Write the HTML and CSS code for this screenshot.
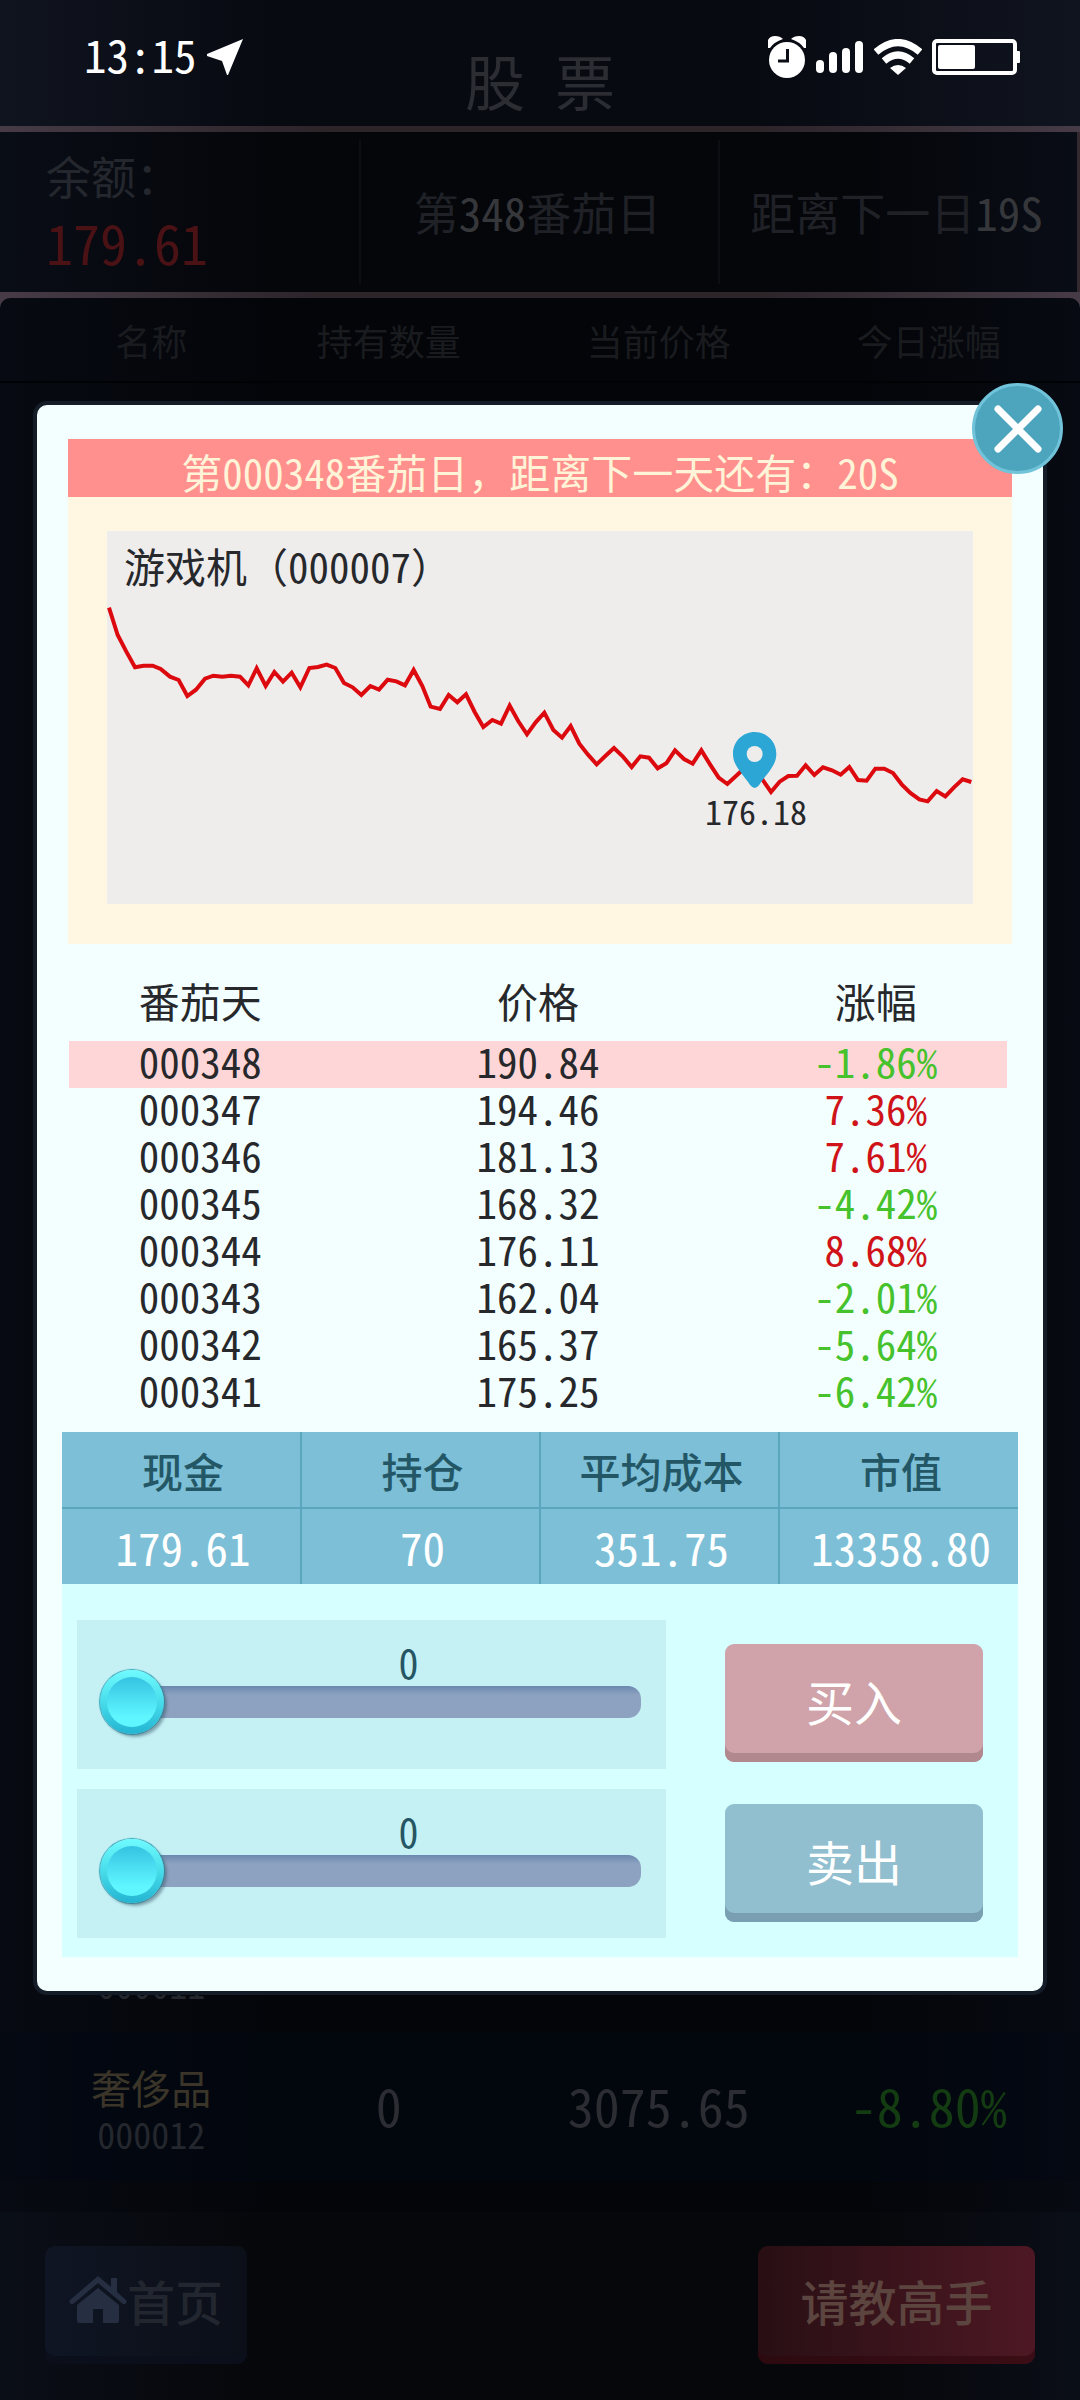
FILE: index.html
```html
<!DOCTYPE html>
<html lang="zh-CN">
<head>
<meta charset="utf-8">
<meta name="viewport" content="width=device-width, initial-scale=1">
<title>股票</title>
<link rel="stylesheet" href="styles.css">
</head>
<body>
<div class="page">
  <div class="status">
    <div class="status-left">
      <span>13:15</span>
      <svg width="36" height="36" viewBox="0 0 36 36" aria-hidden="true"><path fill="#fff" d="M36 0 0 15v2l15 5 5 14h1z"/></svg>
    </div>
    <div class="status-right">
      <svg width="38" height="42" viewBox="0 0 38 42" aria-hidden="true">
        <circle cx="19" cy="24" r="18" fill="#fff"/>
        <path fill="#fff" d="M0 12V4Q2 0 7 0q5 0 8 3Q6 6 2 12zM38 12V4Q36 0 31 0q-5 0-8 3 9 3 13 9z"/>
        <path fill="none" stroke="#0b0e16" stroke-width="3" d="M19.500 13v12H10"/>
      </svg>
      <svg width="48" height="34" viewBox="0 0 48 34" aria-hidden="true">
        <g fill="#fff"><rect y="20" width="8" height="13" rx="4"/><rect x="13" y="12" width="8" height="21" rx="4"/><rect x="26" y="8" width="8" height="25" rx="4"/><rect x="39" y="1" width="8" height="32" rx="4"/></g>
      </svg>
      <svg width="48" height="36" viewBox="0 0 48 36" aria-hidden="true">
        <g fill="none" stroke="#fff" stroke-width="7"><path d="M2 13Q24-6 46 13"/><path d="M10 22Q24 10 38 22"/></g>
        <path fill="#fff" d="M16 29q8-6 16 0l-8 7z"/>
      </svg>
      <svg width="88" height="36" viewBox="0 0 88 36" aria-hidden="true">
        <rect x="2" y="2" width="81" height="32" rx="3" fill="none" stroke="#fff" stroke-width="4"/>
        <rect x="6" y="6" width="37" height="24" rx="2" fill="#fff"/>
        <rect x="84" y="12" width="4" height="12" rx="1" fill="#fff"/>
      </svg>
    </div>
  </div>

  <header class="title-bar"><h1>股 票</h1></header>

  <section class="info">
    <div class="info-cell balance"><span>余额：</span><strong>179.61</strong></div>
    <div class="info-cell">第<b>348</b>番茄日</div>
    <div class="info-cell">距离下一日<b>19S</b></div>
  </section>

  <main class="board">
    <div class="list">
      <table class="stocks">
        <colgroup><col class="c-name"><col class="c-hold"><col class="c-price"><col class="c-change"><col></colgroup>
        <thead><tr><th>名称</th><th>持有数量</th><th>当前价格</th><th>今日涨幅</th><td></td></tr></thead>
        <tbody>
          <tr class="covered"><td colspan="5"></td></tr>
          <tr><td class="name"><span></span><small>000011</small></td><td></td><td></td><td></td><td></td></tr>
          <tr class="lit"><td class="name"><span>奢侈品</span><small>000012</small></td><td>0</td><td>3075.65</td><td class="fall">-8.80%</td><td></td></tr>
        </tbody>
      </table>
    </div>
  </main>

  <footer class="footer">
    <button class="home" type="button">
      <svg width="58" height="48" viewBox="0 0 58 48" aria-hidden="true"><path fill="#262f42" d="M29 0 1 24q-2 4 3 4L29 7l25 21q5 0 3-4l-9-8V2h-6v9zM8 29 29 12l21 17v16q0 2-2 2H34V33H24v14H10q-2 0-2-2z"/></svg>
      <span>首页</span>
    </button>
    <button class="expert" type="button">请教高手</button>
  </footer>

  <section class="dialog" role="dialog" aria-label="游戏机">
    <button class="close" type="button" aria-label="关闭">
      <svg width="48" height="48" viewBox="0 0 48 48" aria-hidden="true"><path d="M4 4l40 40M44 4 4 44" stroke="#fff" stroke-width="7" stroke-linecap="round"/></svg>
    </button>

    <div class="quote">
      <p class="banner">第<span class="num">000348</span>番茄日，距离下一天还有：<span class="num">20S</span></p>
      <div class="chart">
        <h2>游戏机（<span class="num">000007</span>）</h2>
        <svg class="plot" viewBox="0 0 866 373">
          <g transform="translate(-47 -31) scale(0.33333)">
            <polyline fill="none" stroke="#dc0a0f" stroke-width="12" points="147,323 173,405 199,455 225,502 251,497 278,497 302,507 330,530 356,540 382,588 408,569 435,536 460,527 487,530 513,527 540,530 565,556 590,505 617,558 643,516 669,545 695,518 721,562 748,504 774,501 800,494 826,504 852,549 878,562 904,585 931,558 957,569 983,539 1009,544 1035,556 1061,510 1087,558 1112,620 1140,627 1166,585 1192,607 1218,583 1244,636 1270,681 1297,660 1323,671 1349,617 1375,664 1401,703 1427,667 1453,638 1480,690 1506,713 1532,678 1558,731 1584,764 1610,793 1636,768 1662,744 1688,769 1715,801 1741,769 1767,773 1793,805 1819,790 1845,751 1872,777 1898,791 1924,751 1950,793 1976,833 2002,852 2028,828 2055,803 2081,805 2107,838 2133,876 2159,845 2185,828 2211,827 2237,796 2263,825 2289,802 2316,811 2342,824 2368,801 2394,840 2420,842 2446,806 2473,806 2499,819 2525,853 2551,879 2578,898 2603,904 2630,873 2656,889 2682,862 2708,838 2734,846"/>
            <path fill="#2ba6d5" d="M2084 696c36 0 65 29 65 65 0 36-26 56-52 95q-13 16-26 0c-26-39-52-59-52-95 0-36 29-65 65-65z"/>
            <circle cx="2084" cy="762" r="24" fill="#efedec"/>
          </g>
          <text class="mark" x="649" y="294" text-anchor="middle">176.18</text>
        </svg>
      </div>
    </div>

    <table class="history">
      <colgroup><col class="h-side"><col><col class="h-side"></colgroup>
      <thead><tr><th>番茄天</th><th>价格</th><th>涨幅</th></tr></thead>
      <tbody>
        <tr class="current"><td>000348</td><td>190.84</td><td class="down">-1.86%</td></tr>
        <tr><td>000347</td><td>194.46</td><td class="up">7.36%</td></tr>
        <tr><td>000346</td><td>181.13</td><td class="up">7.61%</td></tr>
        <tr><td>000345</td><td>168.32</td><td class="down">-4.42%</td></tr>
        <tr><td>000344</td><td>176.11</td><td class="up">8.68%</td></tr>
        <tr><td>000343</td><td>162.04</td><td class="down">-2.01%</td></tr>
        <tr><td>000342</td><td>165.37</td><td class="down">-5.64%</td></tr>
        <tr><td>000341</td><td>175.25</td><td class="down">-6.42%</td></tr>
      </tbody>
    </table>

    <table class="summary">
      <thead><tr><th>现金</th><th>持仓</th><th>平均成本</th><th>市值</th></tr></thead>
      <tbody><tr><td>179.61</td><td>70</td><td>351.75</td><td>13358.80</td></tr></tbody>
    </table>

    <form class="trade">
      <div class="sliders">
        <div class="slider"><label for="buy">0</label><input id="buy" type="range" min="0" max="100" value="0"></div>
        <div class="slider"><label for="sell">0</label><input id="sell" type="range" min="0" max="100" value="0"></div>
      </div>
      <div class="actions">
        <button class="buy" type="button">买入</button>
        <button class="sell" type="button">卖出</button>
      </div>
    </form>
  </section>
</div>
</body>
</html>
```
FILE: styles.css
```css
* { box-sizing: border-box; }

body {
  margin: 0;
  background: #05060a;
  color: #2b2d32;
  font-family: "Noto Sans CJK SC", sans-serif;
  font-feature-settings: "hwid";
}

h1, h2, p { margin: 0; font-weight: 400; }
th { font-weight: 400; }
table { border-collapse: collapse; table-layout: fixed; width: 100%; }
td, th { padding: 0; text-align: center; }
button { border: 0; padding: 0; font: inherit; font-feature-settings: inherit; cursor: pointer; }

.page {
  position: relative;
  display: flex;
  flex-direction: column;
  min-height: 100vh;
  background: linear-gradient(90deg, #090d16, #05060a 25%, #05060a 80%, #090d16);
}

/* Status bar */
.status {
  position: absolute;
  inset: 0 0 auto;
  display: flex;
  justify-content: space-between;
  align-items: center;
  height: 114px;
  padding: 0 60px 0 84px;
  color: #fff;
  font-size: 45px;
  line-height: 60px;
}
.status-left, .status-right { display: flex; align-items: center; gap: 10px; }
.status-left span { padding-bottom: 6px; }

/* Page behind the dialog */
.title-bar {
  height: 132px;
  padding-top: 36px;
  border-bottom: 6px solid #33292f;
  border-image: linear-gradient(90deg, #463b46, #2c2429 30%, #2c2429 70%, #463b46) 1;
  background: linear-gradient(90deg, #10141f, #070a11 25%, #070a11 70%, #10141f);
  text-align: center;
}
.title-bar h1 { font-size: 60px; line-height: 88px; }

.info {
  display: grid;
  grid-template-columns: 1fr 1fr 1fr;
  height: 160px;
  padding: 8px 0;
  border-right: 3px solid #33292f;
  color: #1f2127;
  font-size: 45px;
  line-height: 66px;
}
.info-cell { display: flex; align-items: center; justify-content: center; }
.info-cell + .info-cell { padding-right: 4px; border-left: 2px solid #0c0e14; }
.info-cell b { font-weight: 400; color: #35373b; }
.info .balance { flex-direction: column; align-items: flex-start; padding: 0 0 6px 46px; color: #24272d; }
.balance strong { color: #4a1214; font-size: 54px; font-weight: 400; }

.board {
  flex: 1;
  display: flex;
  flex-direction: column;
  padding-top: 6px;
  background: linear-gradient(90deg, #463b46, #2c2429 30%, #2c2429 70%, #463b46);
}
.list {
  flex: 1;
  border-radius: 10px 10px 0 0;
  background: linear-gradient(90deg, #070a12, #040509 25%, #040509 80%, #070a12);
}
.c-name { width: 28%; }
.c-hold, .c-change { width: 16%; }
.c-price { width: 34%; }
.stocks th { height: 84px; border-bottom: 2px solid #010203; color: #191b1f; font-size: 36px; white-space: nowrap; }
.stocks td { height: 150px; padding-bottom: 6px; font-size: 52px; white-space: nowrap; }
.stocks thead td { height: 84px; border-bottom: 2px solid #010203; }
.stocks .covered td { height: 1500px; }
.lit { background: rgba(0, 8, 20, .4); }
.stocks .name { padding: 6px 0 0; line-height: 46px; }
.name span, .name small { display: block; min-height: 46px; }
.name span { color: #3a3528; font-size: 40px; }
.name small { color: #24272d; font-size: 36px; }
.stocks .fall { color: #143c12; }

.footer {
  display: flex;
  justify-content: space-between;
  align-items: flex-start;
  height: 188px;
  padding: 34px 45px 0;
  background: linear-gradient(90deg, #0a0e17, #06070a 25%, #06070a 80%, #0a0e17);
}
.footer button { height: 118px; padding-bottom: 10px; border-radius: 10px; font-size: 48px; font-weight: 500; }
.home {
  display: flex;
  align-items: center;
  justify-content: center;
  width: 202px;
  background: linear-gradient(90deg, #0f1523, #0b0f18);
  box-shadow: inset 0 -8px #0a0f1b;
  color: #22262f;
}
.expert {
  width: 277px;
  background: linear-gradient(90deg, #280f14, #4d1823);
  box-shadow: inset 0 -8px rgba(48, 6, 14, .6);
  color: #5c443f;
}

/* Dialog */
.dialog {
  position: absolute;
  inset: 405px 37px auto;
  padding: 34px 25px;
  border-radius: 10px;
  background: #f3ffff;
  box-shadow: 0 0 0 4px #141d27;
  color: #26282b;
}
.close {
  position: absolute;
  top: -22px;
  right: -20px;
  display: grid;
  place-items: center;
  width: 91px;
  height: 91px;
  border: 3px solid #70c3d9;
  border-radius: 50%;
  background: #4ca5bc;
}

.quote { margin: 0 6px; background: #fff7e2; }
.banner, .chart h2 { font-feature-settings: normal; text-spacing-trim: space-all; }
.num { font-feature-settings: "hwid"; }
.banner { height: 58px; background: #ff908d; color: #fff3d8; font-size: 41px; line-height: 64px; text-align: center; }
.chart { position: relative; padding: 34px 39px 40px; }
.chart h2 { position: absolute; top: 40px; left: 56px; font-size: 41px; line-height: 56px; }
.plot { display: block; width: 100%; background: #efedec; }
.mark { fill: #26282b; font-size: 34px; }

.history { width: auto; min-width: calc(100% - 18px); margin: 0 12px 15px 7px; font-size: 41px; line-height: 38px; }
.h-side { width: 28%; }
.history th { height: 97px; padding-top: 14px; }
.history td { height: 47px; vertical-align: top; }
.current { background: #ffd6d7; }
.down { color: #46c22c; }
.up { color: #cf1318; }

.summary { background: #7cbfd7; }
.summary th, .summary td { padding-left: 4px; }
.summary th { height: 76px; border-bottom: 2px solid #5ba5bd; color: #245766; font-size: 41px; font-weight: 500; }
.summary td { height: 76px; color: #fff; font-size: 45px; }
.summary th + th, .summary td + td { border-left: 2px solid #5ba5bd; }

.trade { display: flex; justify-content: space-between; padding: 36px 35px 19px 15px; background: #d6ffff; }
.sliders { display: flex; flex-direction: column; gap: 20px; width: 65%; }
.slider { display: flex; flex-direction: column; height: 149px; padding: 22px 25px 0 23px; background: #c5f1f5; }
.slider label { padding: 0 0 2px 76px; color: #265663; font-size: 40px; line-height: 40px; text-align: center; }
.slider input { appearance: none; width: 100%; height: 36px; margin: 0; background: none; }
.slider input::-webkit-slider-runnable-track {
  height: 32px;
  border-radius: 13px;
  background: linear-gradient(#6c88b0, #8ca2c0 28%, #8ca2c0);
}
.slider input::-webkit-slider-thumb {
  appearance: none;
  width: 64px;
  height: 64px;
  margin-top: -16px;
  border: 7px solid transparent;
  border-radius: 50%;
  background: linear-gradient(#35c3e2, #5ff6ff 80%) padding-box, linear-gradient(#6ffbff, #48dcea 50%, #23b4d2) border-box;
  box-shadow: 3px 3px 3px rgba(60, 90, 110, .5), 0 0 1px 1px #35a9bb;
}

.actions { display: flex; flex-direction: column; gap: 42px; width: 258px; padding-top: 24px; }
.actions button { height: 118px; padding-bottom: 6px; border-radius: 9px; color: #fff; font-size: 48px; }
.buy { background: #cfa3a9; box-shadow: inset 0 -9px #b2888f; }
.sell { background: #91bfcf; box-shadow: inset 0 -9px #7a9fb2; }
```
